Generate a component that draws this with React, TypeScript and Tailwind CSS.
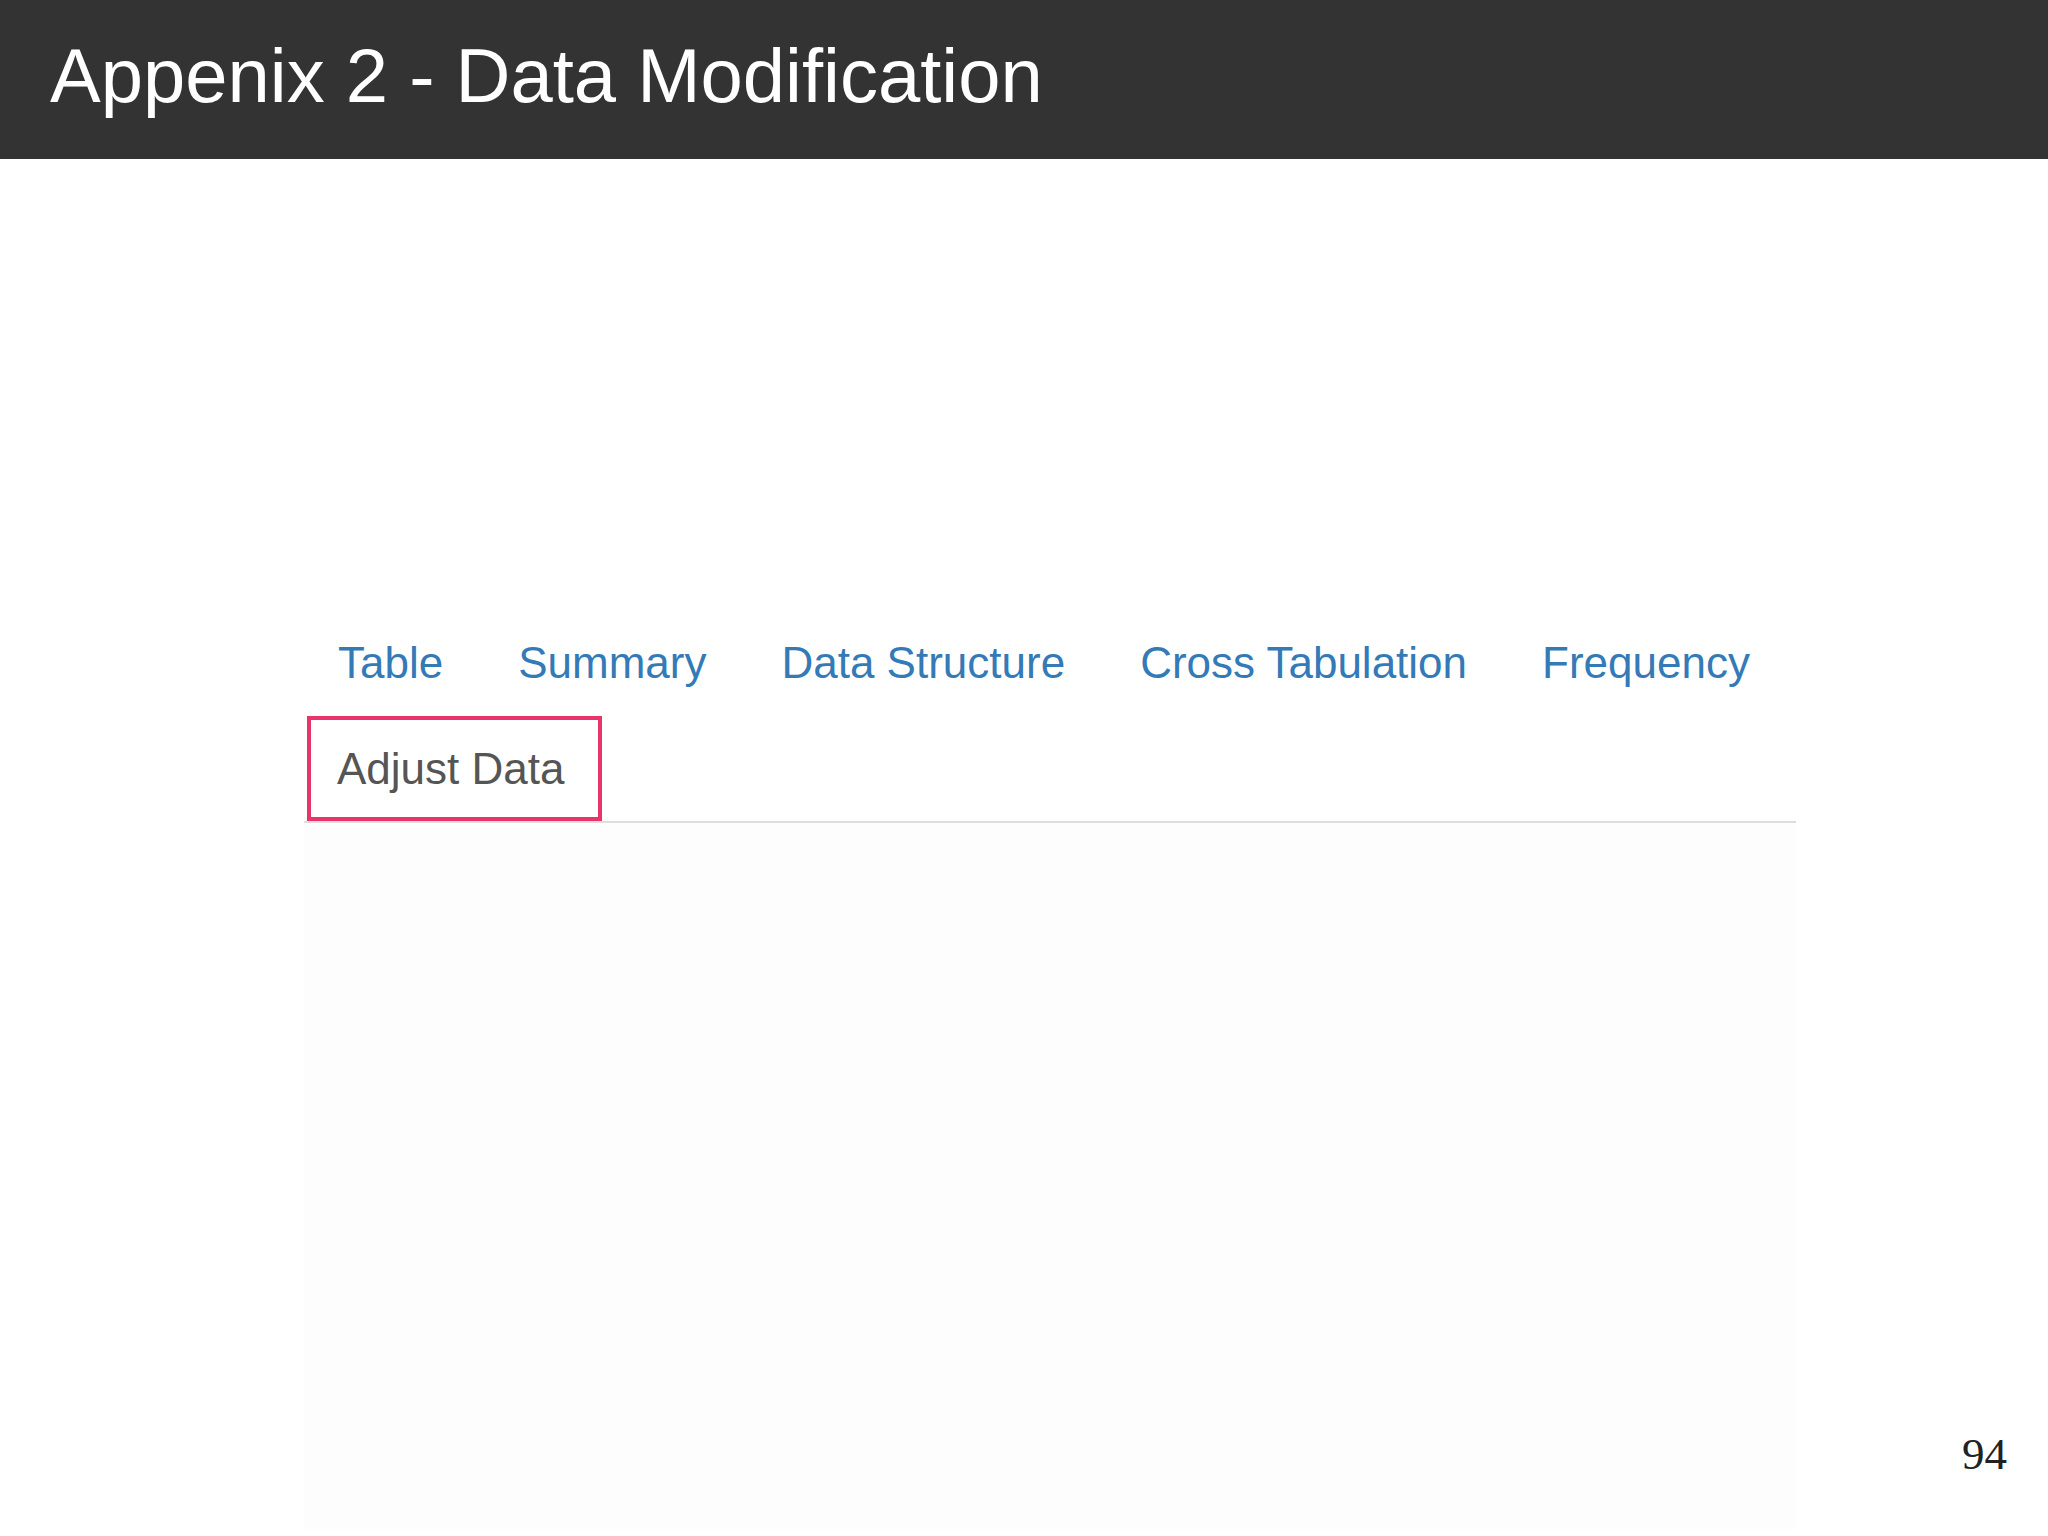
import React from 'react';

const tabs = ['Table', 'Summary', 'Data Structure', 'Cross Tabulation', 'Frequency'];

export default function App() {
  return (
    <div className="w-[2048px] h-[1536px] bg-white flex flex-col overflow-hidden font-['Liberation_Sans',Arial,sans-serif]">
      {/* Slide title bar */}
      <header className="h-[159px] shrink-0 bg-[#333333] pl-[50px] pt-[38px]">
        <h1 className="text-[76px] leading-none text-white font-normal">
          Appenix 2 - Data Modification
        </h1>
      </header>

      {/* Screenshot of the tab bar */}
      <div className="flex-1 flex flex-col">
        <div className="ml-[304px] w-[1492px] mt-[452px] flex-1 flex flex-col">
          <div className="border-b-2 border-[#dddddd] bg-white">
            <div className="flex h-[105px]">
              {tabs.map((t) => (
                <div key={t} className="px-[34px] mr-[7px] pt-[21px] text-[44px] leading-[61px] text-[#337ab7] whitespace-nowrap">
                  {t}
                </div>
              ))}
            </div>
            <div className="flex h-[105px]">
              <div className="ml-[3px] h-[105px] border-[4px] border-[#e8336b] bg-white pl-[26px] pr-[34px] pt-[18px] text-[44px] leading-[61px] text-[#555555] whitespace-nowrap">
                Adjust Data
              </div>
            </div>
          </div>
          <div className="flex-1 bg-[#fdfdfd]" />
        </div>
        {/* Page number */}
        <div className="flex justify-end pr-[41px] pb-[59px] -mt-[97px]">
          <span className="font-['Liberation_Serif','Times_New_Roman',serif] text-[45px] leading-none text-[#222222]">94</span>
        </div>
      </div>
    </div>
  );
}
